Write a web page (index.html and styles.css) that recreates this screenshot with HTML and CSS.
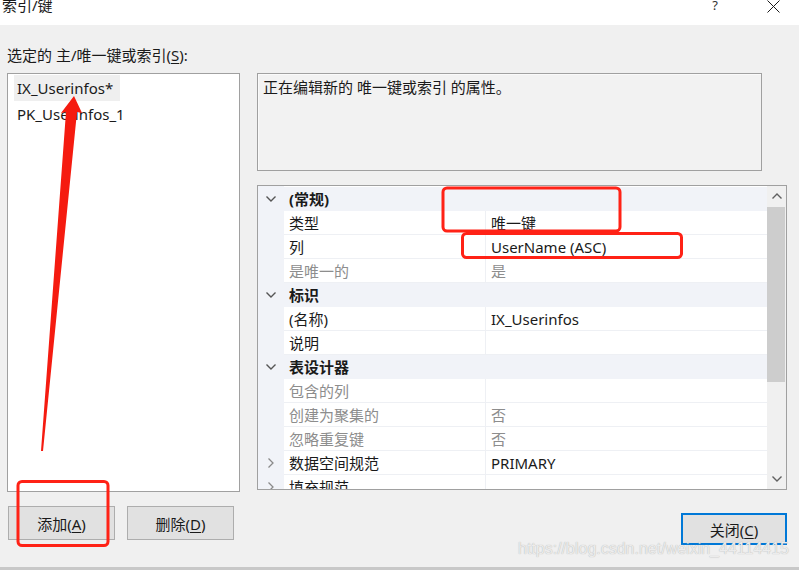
FILE: index.html
```html
<!DOCTYPE html>
<html lang="zh-CN">
<head>
<meta charset="utf-8">
<title>索引/键</title>
<link rel="stylesheet" href="styles.css">
</head>
<body>
<div class="window">
  <div class="titlebar">
    <span class="title">索引/键</span>
    <span class="help">?</span>
    <svg class="close-x" width="13" height="13" viewBox="0 0 13 13"><path d="M0.5 0.5 L12.5 12.5 M12.5 0.5 L0.5 12.5" stroke="#1a1a1a" stroke-width="1"/></svg>
  </div>
  <div class="content">
    <div class="caption">选定的 主/唯一键或索引(<u>S</u>):</div>
    <div class="main">
      <div class="left">
        <div class="list">
          <div class="item selected">IX_Userinfos*</div>
          <div class="item">PK_Userinfos_1</div>
        </div>
        <div class="btnrow">
          <button class="btn">添加(<u>A</u>)</button>
          <button class="btn">删除(<u>D</u>)</button>
        </div>
      </div>
      <div class="right">
        <div class="desc">正在编辑新的 唯一键或索引 的属性。</div>
        <div class="grid">
          <div class="rows">
            <div class="row cat"><span class="gut"><svg width="10" height="6" viewBox="0 0 10 6"><polyline points="0.5,0.5 5,5 9.5,0.5" fill="none" stroke="#555" stroke-width="1.4"/></svg></span><span class="lbl">(常规)</span></div>
            <div class="row"><span class="gut"></span><span class="lbl">类型</span><span class="val">唯一键</span></div>
            <div class="row"><span class="gut"></span><span class="lbl">列</span><span class="val">UserName (ASC)</span></div>
            <div class="row dim"><span class="gut"></span><span class="lbl">是唯一的</span><span class="val">是</span></div>
            <div class="row cat"><span class="gut"><svg width="10" height="6" viewBox="0 0 10 6"><polyline points="0.5,0.5 5,5 9.5,0.5" fill="none" stroke="#555" stroke-width="1.4"/></svg></span><span class="lbl">标识</span></div>
            <div class="row"><span class="gut"></span><span class="lbl">(名称)</span><span class="val">IX_Userinfos</span></div>
            <div class="row"><span class="gut"></span><span class="lbl">说明</span><span class="val"></span></div>
            <div class="row cat"><span class="gut"><svg width="10" height="6" viewBox="0 0 10 6"><polyline points="0.5,0.5 5,5 9.5,0.5" fill="none" stroke="#555" stroke-width="1.4"/></svg></span><span class="lbl">表设计器</span></div>
            <div class="row dim"><span class="gut"></span><span class="lbl">包含的列</span><span class="val"></span></div>
            <div class="row dim"><span class="gut"></span><span class="lbl">创建为聚集的</span><span class="val">否</span></div>
            <div class="row dim"><span class="gut"></span><span class="lbl">忽略重复键</span><span class="val">否</span></div>
            <div class="row"><span class="gut"><svg width="6" height="10" viewBox="0 0 6 10"><polyline points="0.5,0.5 5,5 0.5,9.5" fill="none" stroke="#8a8a8a" stroke-width="1.3"/></svg></span><span class="lbl">数据空间规范</span><span class="val">PRIMARY</span></div>
            <div class="row"><span class="gut"><svg width="6" height="10" viewBox="0 0 6 10"><polyline points="0.5,0.5 5,5 0.5,9.5" fill="none" stroke="#8a8a8a" stroke-width="1.3"/></svg></span><span class="lbl">填充规范</span><span class="val"></span></div>
          </div>
          <div class="scroll">
            <div class="sbtn"><svg width="10" height="6" viewBox="0 0 10 6"><polyline points="0.5,5.5 5,1 9.5,5.5" fill="none" stroke="#606060" stroke-width="1.4"/></svg></div>
            <div class="thumb"></div>
            <div class="track"></div>
            <div class="sbtn"><svg width="10" height="6" viewBox="0 0 10 6"><polyline points="0.5,0.5 5,5 9.5,0.5" fill="none" stroke="#606060" stroke-width="1.4"/></svg></div>
          </div>
        </div>
        <div class="closerow"><button class="btn primary">关闭(<u>C</u>)</button></div>
      </div>
    </div>
  </div>
  <div class="bottom"></div>
</div>
<svg class="annot" width="799" height="570" viewBox="0 0 799 570">
  <rect x="443" y="188" width="177" height="43" rx="4" fill="none" stroke="#ff2216" stroke-width="3"/>
  <rect x="462.5" y="233.5" width="219" height="24" rx="4" fill="none" stroke="#ff2216" stroke-width="3"/>
  <rect x="18" y="481.5" width="90" height="64" rx="4" fill="none" stroke="#ff2216" stroke-width="3"/>
  <polygon points="74,96 82,113 77,112 43,451 41,451 66,112 61,113" fill="#f51b10"/>
</svg>
<div class="watermark">https://blog.csdn.net/weixin_44114415</div>
</body>
</html>
```

FILE: styles.css
```css
* { box-sizing: border-box; }
html, body { margin: 0; padding: 0; }
body {
  width: 799px;
  height: 570px;
  overflow: hidden;
  position: relative;
  background: #f0f0f0;
  font-family: "Noto Sans", "Noto Sans CJK SC", sans-serif;
  font-size: 15px;
  color: #1a1a1a;
}
.window {
  display: flex;
  flex-direction: column;
  height: 570px;
}
.titlebar {
  height: 25px;
  background: #ffffff;
  display: flex;
  align-items: flex-start;
  flex: none;
}
.title {
  line-height: 12px;
  padding-left: 2px;
  margin-top: -1px;
}
.help {
  margin-left: auto;
  font-size: 13px;
  line-height: 10px;
  color: #333;
  margin-top: 0;
}
.close-x {
  margin-left: 49px;
  margin-right: 19px;
  margin-top: 0;
}
.content {
  flex: 1;
  padding: 0 12px 0 7px;
}
.caption {
  margin-top: 20px;
  line-height: 20px;
  height: 20px;
}
u { text-underline-offset: 2px; }
.main {
  margin-top: 8px;
  display: flex;
  gap: 17px;
}
.left {
  width: 233px;
  flex: none;
}
.list {
  height: 419px;
  background: #fff;
  border: 1px solid #a0a0a0;
  padding: 1px 0 0 6px;
}
.item {
  height: 26px;
  line-height: 26px;
  padding: 0 3px;
  width: fit-content;
}
.item.selected { background: #efefef; padding-right: 7px; }
.btnrow {
  margin-top: 14px;
  margin-left: 1px;
  display: flex;
  gap: 12px;
}
.btn {
  font-family: inherit;
  font-size: 15px;
  color: #1a1a1a;
  background: #e1e1e1;
  border: 1px solid #adadad;
  width: 107px;
  height: 34px;
  padding: 0;
}
.right {
  flex: 1;
  display: flex;
  flex-direction: column;
}
.desc {
  width: 505px;
  height: 98px;
  background: #f2f2f2;
  border: 1px solid #a0a0a0;
  box-shadow: inset 1px 1px 0 #fafafa;
  padding: 3px 5px;
  line-height: 20px;
}
.grid {
  margin-top: 14px;
  height: 305px;
  border: 1px solid #a0a0a0;
  display: flex;
  overflow: hidden;
  background: #fff;
}
.rows {
  flex: 1;
  overflow: hidden;
  padding-top: 1px;
  background: linear-gradient(to right, #f1f3f8 26px, #fff 26px);
}
.row {
  display: flex;
  height: 24px;
  line-height: 24px;
}
.gut {
  width: 26px;
  flex: none;
  background: #f1f3f8;
  display: flex;
  align-items: center;
  justify-content: center;
}
.lbl {
  width: 201px;
  flex: none;
  padding-left: 5px;
  border-bottom: 1px solid #eef0f4;
  white-space: nowrap;
}
.val {
  flex: 1;
  padding-left: 5px;
  border-left: 1px solid #eef0f4;
  border-bottom: 1px solid #eef0f4;
  white-space: nowrap;
}
.row.cat { background: #f1f3f8; }
.row.cat .lbl { font-weight: bold; border-bottom: none; flex: 1; }
.row.dim .lbl, .row.dim .val { color: #8d8d8d; }
.scroll {
  width: 19px;
  flex: none;
  background: #f0f0f0;
  display: flex;
  flex-direction: column;
}
.sbtn {
  height: 20px;
  display: flex;
  align-items: center;
  justify-content: center;
  flex: none;
}
.thumb {
  height: 175px;
  margin: 1px 1px 0 0;
  background: #cdcdcd;
  flex: none;
}
.track { flex: 1; }
.closerow {
  margin-top: 23px;
  display: flex;
  justify-content: flex-end;
}
.btn.primary {
  width: 106px;
  height: 32px;
  border: 2px solid #0078d7;
}
.bottom {
  height: 3px;
  background: #c8c8c8;
  flex: none;
}
.annot {
  position: absolute;
  left: 0;
  top: 0;
  pointer-events: none;
}
.watermark {
  position: absolute;
  left: 518px;
  top: 540px;
  font-family: "Liberation Sans", sans-serif;
  font-size: 16px;
  color: #ececec;
  text-shadow: 0 0 1px #a8a8a8;
  pointer-events: none;
}
```
